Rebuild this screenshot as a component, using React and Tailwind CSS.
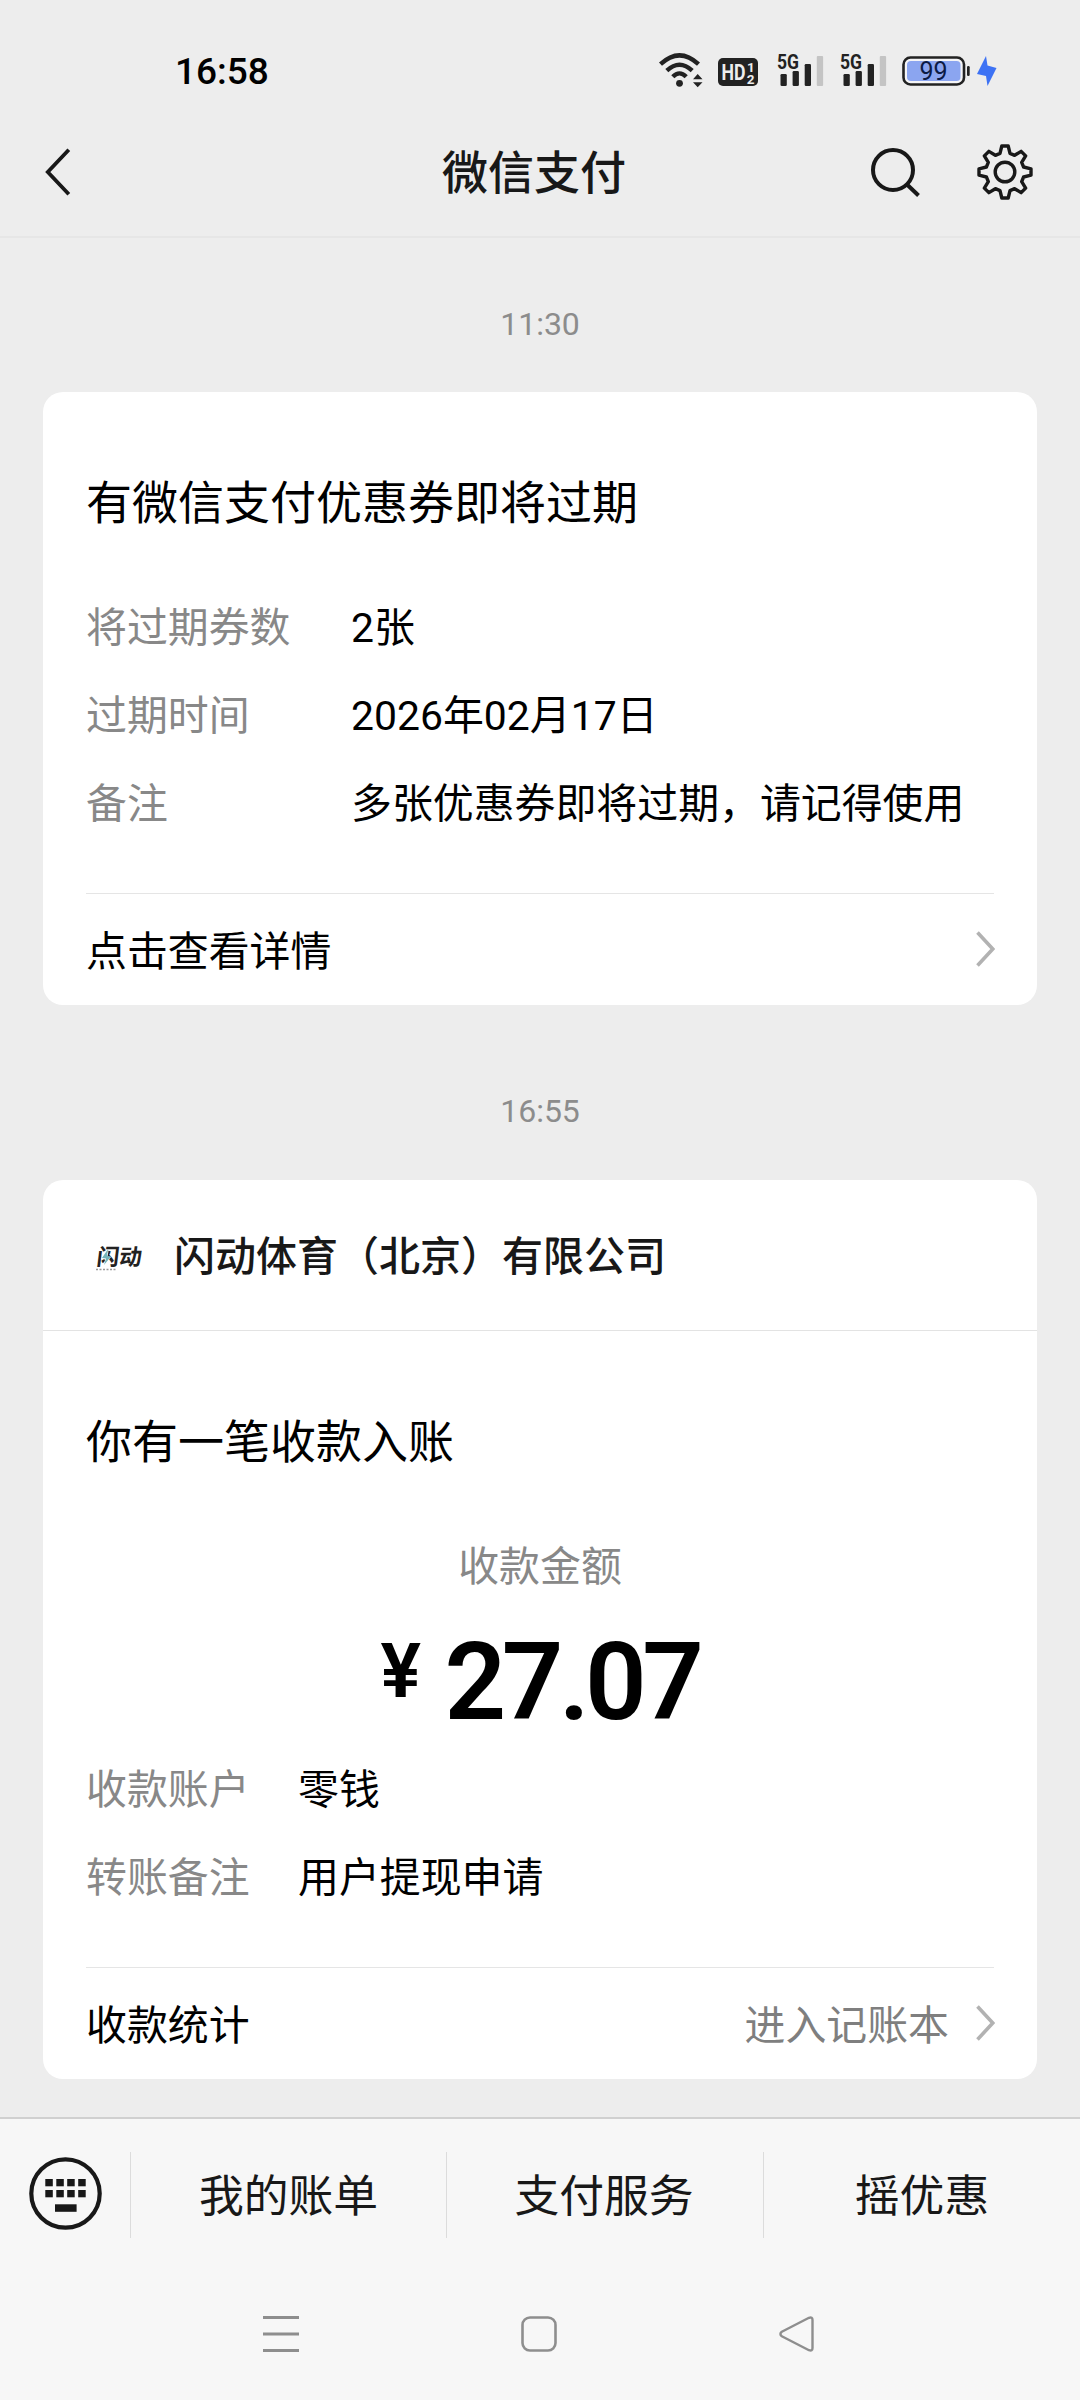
import React from 'react';

const GEAR_POINTS = Array.from({ length: 8 }, (_, i) => {
  const a = (i * Math.PI) / 4;
  const tooth = [[-5, -18.6], [-3.2, -26], [3.2, -26], [5, -18.6]];
  return tooth
    .map(([x, y]) => {
      const px = x * Math.cos(a) - y * Math.sin(a);
      const py = x * Math.sin(a) + y * Math.cos(a);
      return px.toFixed(2) + ',' + py.toFixed(2);
    })
    .join(' ');
}).join(' ');

function Signal() {
  return (
    <svg className="overflow-visible" width="48" height="36" viewBox="0 0 48 36">
      <text x="0" y="17" fontSize="21" fontWeight="700" textLength="22" lengthAdjust="spacingAndGlyphs" fill="#222" fontFamily="Roboto, sans-serif">5G</text>
      <rect x="3.5" y="22" width="6.3" height="12" rx="1.3" fill="#222" />
      <rect x="15.6" y="19" width="6.3" height="15" rx="1.3" fill="#222" />
      <rect x="27.7" y="12" width="6.3" height="22" rx="1.3" fill="#222" />
      <rect x="39.8" y="4" width="6.3" height="30" rx="1" fill="#c4c4c4" />
    </svg>
  );
}

function StatusBar() {
  return (
    <div className="flex h-[104px] pt-[52px]">
      <div className="ml-[175px] w-[484px] pt-px text-[37px] leading-[38px] font-medium text-black">16:58</div>
      <svg className="mr-[15px]" width="44" height="36" viewBox="0 0 44 36">
        <g fill="none" stroke="#222" strokeWidth="4.4">
          <path d="M1.5 12.2 Q20.5 -5.5 39.5 12.2" />
          <path d="M7.8 18.6 Q20.5 6.8 33.2 18.6" />
          <path d="M13.8 24.8 Q20.5 18 27.2 24.8" />
        </g>
        <circle cx="20.5" cy="31.3" r="3.4" fill="#222" />
        <path d="M34 27.2 L38.7 22 L43.5 27.2Z M34 30.2 L38.7 35.3 L43.5 30.2Z" fill="#222" />
      </svg>
      <svg className="mr-[19px]" width="40" height="36" viewBox="0 0 40 36">
        <rect y="6" width="40" height="28" rx="5" fill="#222" />
        <g fill="#ededed" fontFamily="Roboto, sans-serif" fontWeight="700">
          <text x="3.5" y="28" fontSize="22" textLength="24" lengthAdjust="spacingAndGlyphs">HD</text>
          <text x="29" y="19.5" fontSize="13.5">1</text>
          <text x="28.8" y="32" fontSize="13.5">2</text>
        </g>
      </svg>
      <div className="mr-[15px]"><Signal /></div>
      <div className="mr-[14px]"><Signal /></div>
      <svg width="98" height="36" viewBox="0 0 98 36">
        <rect x="1.5" y="5.5" width="60.5" height="27" rx="7" fill="#f4f4f6" stroke="#222" strokeWidth="2.6" />
        <rect x="5" y="9" width="53.5" height="20" rx="4" fill="#8ba5f0" />
        <rect x="65" y="14" width="2.7" height="10" rx="1.2" fill="#222" />
        <text x="31.5" y="28" textAnchor="middle" fontSize="25" fill="#0c1b45" fontFamily="Roboto, sans-serif">99</text>
        <path d="M84 4 L75 22 L84 24 L85.5 34 L94.5 16 L85.5 13.5Z" fill="#3d72f4" />
      </svg>
    </div>
  );
}

function Header() {
  return (
    <div className="flex h-[134px] items-center border-b-2 border-[#e6e6e6] pt-[4px]">
      <svg className="ml-[45px]" width="26" height="48" viewBox="0 0 26 48">
        <path d="M23.8 1.8 L2.8 24 L23.8 46.2" fill="none" stroke="#181818" strokeWidth="3.8" />
      </svg>
      <div className="ml-[371px] w-[184px] pt-[2px] text-[46px] leading-[68px] font-medium whitespace-nowrap text-[#181818]">微信支付</div>
      <svg className="ml-[244px]" width="52" height="54" viewBox="0 0 52 54">
        <circle cx="23" cy="25" r="20" fill="none" stroke="#181818" strokeWidth="4" />
        <path d="M37 39.5 L48.5 50.5" stroke="#181818" strokeWidth="4" />
      </svg>
      <svg className="ml-[54px]" width="58" height="58" viewBox="-29 -29 58 58">
        <polygon points={GEAR_POINTS} fill="none" stroke="#181818" strokeWidth="3.4" strokeLinejoin="round" />
        <circle r="9.8" fill="none" stroke="#181818" strokeWidth="3.4" />
      </svg>
    </div>
  );
}

function Chevron() {
  return (
    <svg className="-mr-px mb-[2px]" width="19" height="36" viewBox="0 0 19 36">
      <path d="M1.5 1.5 L16.8 18 L1.5 34.5" fill="none" stroke="#b2b2b2" strokeWidth="3.6" />
    </svg>
  );
}

function Row({ label, value, labelClass }) {
  return (
    <div className="flex h-[88px] items-center pt-[2px] text-[40.9px] leading-[60px] whitespace-nowrap">
      <div className={labelClass + ' text-[#888888]'}>{label}</div>
      <div className="text-black">{value}</div>
    </div>
  );
}

function CardFooter({ label, action }) {
  return (
    <div className="flex h-[112px] items-center border-t border-[#e5e5e5] text-[40.9px] leading-[60px] text-black">
      <div className="flex-1 pt-[4px]">{label}</div>
      <div className="mr-[27px] pt-[4px] text-[#7f7f7f]">{action}</div>
      <Chevron />
    </div>
  );
}

function Stamp({ children }) {
  return <div className="text-center text-[32px] leading-[40px] text-[#8c8c8c]">{children}</div>;
}

function BrandLogo() {
  return (
    <svg className="mt-[3px]" width="64" height="64" viewBox="0 0 64 64">
      <g transform="translate(10 40) skewX(-7)">
        <text x="0" y="0" fontSize="22.5" fontWeight="700" fill="#222" fontFamily="'Noto Sans CJK SC', sans-serif" textLength="45">闪动</text>
      </g>
      <path d="M22.500 26 L15 34 L19 34.500 L18 40 L25 32 L21.500 31.500Z" fill="#fff" />
      <path d="M22 24 L16 33 L20 33.500 L18 40 L25 31.500 L21 31Z" fill="#73b4ba" />
      <path d="M10 44.500 H30" stroke="#999" strokeWidth="1.300" strokeDasharray="2 1.500" />
    </svg>
  );
}

function Divider() {
  return <div className="h-[86px] w-px bg-[#dcdcdc]" />;
}

export default function App() {
  return (
    <div className="h-[2400px] w-[1080px] overflow-hidden bg-[#ededed] font-['Roboto','Noto_Sans_CJK_SC',sans-serif]">
      <StatusBar />
      <Header />
      <div className="h-[1879px] px-[43px]">
        <div className="h-[154px] pt-[66px]"><Stamp>11:30</Stamp></div>
        <div className="h-[613px] rounded-[20px] bg-white px-[43px] pt-[77px]">
          <div className="mb-[46px] h-[68px] text-[46px] leading-[68px] text-black">有微信支付优惠券即将过期</div>
          <Row label="将过期券数" value="2张" labelClass="w-[265px]" />
          <Row label="过期时间" value="2026年02月17日" labelClass="w-[265px]" />
          <Row label="备注" value="多张优惠券即将过期，请记得使用" labelClass="w-[265px]" />
          <div className="pt-[46px]"><CardFooter label="点击查看详情" /></div>
        </div>
        <div className="h-[175px] pt-[86px]"><Stamp>16:55</Stamp></div>
        <div className="h-[899px] rounded-[20px] bg-white">
          <div className="flex h-[151px] items-center border-b border-[#e3e3e3] px-[43px]">
            <BrandLogo />
            <div className="ml-[24px] pt-[4px] text-[41px] leading-[60px] font-medium text-[#181818]">闪动体育（北京）有限公司</div>
          </div>
          <div className="px-[43px] pt-[77px]">
            <div className="h-[68px] text-[46px] leading-[68px] text-black">你有一笔收款入账</div>
            <div className="mt-[61px] h-[60px] text-center text-[40.9px] leading-[60px] text-[#888888]">收款金额</div>
            <div className="flex h-[148px] justify-center pt-[22px] font-semibold text-black">
              <div className="mr-[18px] w-[46px] pt-[4px] text-[76px] leading-[96px]">¥</div>
              <div className="text-[108px] leading-[126px] tracking-[-4.5px]">27.07</div>
            </div>
            <Row label="收款账户" value="零钱" labelClass="w-[212px]" />
            <Row label="转账备注" value="用户提现申请" labelClass="w-[212px]" />
            <div className="pt-[46px]"><CardFooter label="收款统计" action="进入记账本" /></div>
          </div>
        </div>
      </div>
      <div className="h-[283px] border-t-2 border-[#d0d0d0] bg-[#f7f7f7]">
        <div className="flex h-[152px] items-center text-[44.8px] leading-[66px] text-[#181818]">
          <div className="w-[130px] pb-[3px] pl-[29px]">
            <svg width="73" height="73" viewBox="0 0 73 73" fill="#181818">
              <circle cx="36.5" cy="36.5" r="34.2" fill="none" stroke="#181818" strokeWidth="4.2" />
              {[16.3, 27.3, 38.2, 49.2].map((x) => (
                <React.Fragment key={x}>
                  <rect x={x} y="22" width="7.5" height="7.3" />
                  <rect x={x} y="33" width="7.5" height="7.3" />
                </React.Fragment>
              ))}
              <rect x="26" y="47.3" width="21.6" height="7.5" />
            </svg>
          </div>
          <Divider />
          <div className="w-[315px] pt-[3px] text-center">我的账单</div>
          <Divider />
          <div className="w-[316px] pt-[3px] pr-[2px] text-center">支付服务</div>
          <Divider />
          <div className="w-[316px] pt-[3px] text-center">摇优惠</div>
        </div>
        <div className="flex h-[126px] items-center pl-[263px]">
          <svg className="mr-[222px]" width="36" height="38" viewBox="0 0 36 38">
            <path d="M0 2.5 H36 M0 19 H36 M0 35.5 H36" stroke="#8e8e8e" strokeWidth="3" />
          </svg>
          <svg className="mr-[222px]" width="36" height="38" viewBox="0 0 36 38">
            <rect x="1.5" y="2.5" width="33" height="33" rx="7.5" fill="none" stroke="#8e8e8e" strokeWidth="2.6" />
          </svg>
          <svg width="36" height="38" viewBox="0 0 36 38">
            <path d="M2.8 16.8 L30 2.8 Q33.5 1.5 33.5 5 V33 Q33.5 36.5 30 35.2 L2.8 21.2 Q0 19 2.8 16.8Z" fill="none" stroke="#8e8e8e" strokeWidth="2.4" strokeLinejoin="round" />
          </svg>
        </div>
      </div>
    </div>
  );
}
